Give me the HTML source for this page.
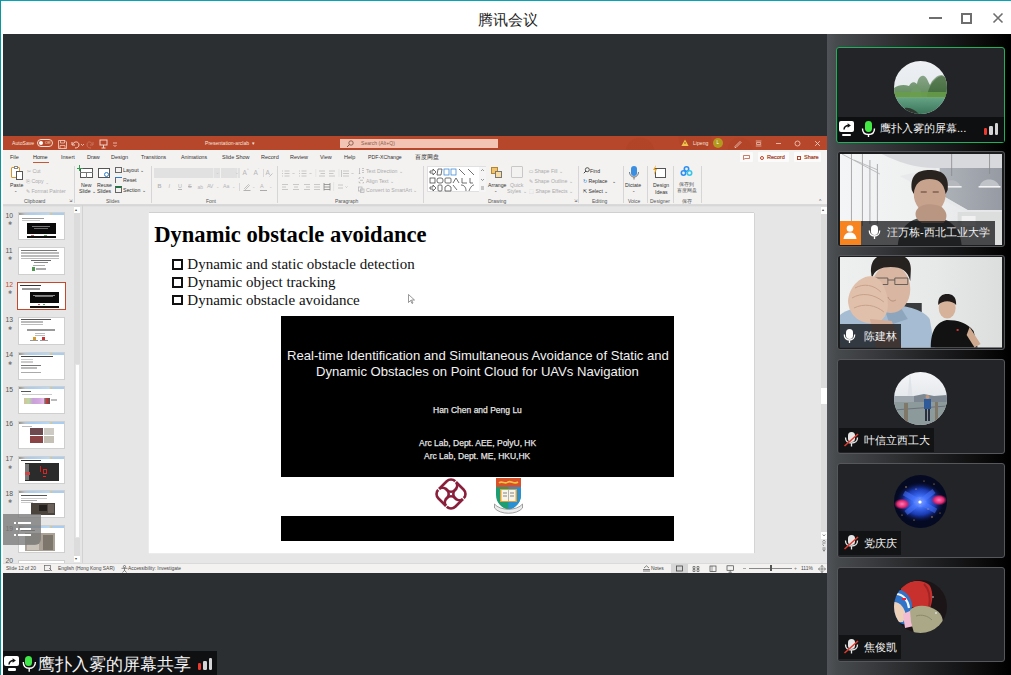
<!DOCTYPE html>
<html><head><meta charset="utf-8">
<style>
*{margin:0;padding:0;box-sizing:border-box}
html,body{width:1011px;height:675px;overflow:hidden;background:#fff;font-family:"Liberation Sans",sans-serif;position:relative}
div,span,svg{position:absolute}
.t{white-space:nowrap;line-height:1;color:#555}
#teal-top{left:0;top:0;width:1011px;height:1px;background:#05a5b8}
#teal-left{left:0;top:0;width:1.3px;height:675px;background:#0a979c}
#title{left:2px;width:1011px;top:10.7px;text-align:center;font-size:15px;color:#222;line-height:18px}
#main{left:3px;top:34px;width:824px;height:641px;background:#2c2f32}
#side{left:827px;top:34px;width:184px;height:641px;background:linear-gradient(90deg,#505357 0,#474a4d 10px,#3b3d40 40px,#212224 100px,#0e0e0f 150px,#000 182px)}
.tile{left:836px;width:169px;height:95px;border:1px solid #3b3d40;border-radius:3px;background:#232427;overflow:hidden}
/* PPT */
#ppt-title{left:3px;top:136px;width:824px;height:14px;background:#b7472a}
#ppt-ribbon{left:3px;top:150px;width:824px;height:55px;background:#f3f2f1;border-bottom:1px solid #d9d9d9}
#ppt-work{left:3px;top:205px;width:824px;height:358px;background:#e6e6e6}
#ppt-status{left:3px;top:563px;width:824px;height:10px;background:#f3f2f1;border-top:1px solid #dadada}
#slide{left:149px;top:213px;width:605px;height:340px;background:#fff;box-shadow:0 -1px 0 #d0d0d0,1px 0 0 #d4d4d4,-1px 0 0 #ececec,0 1px 0 #ececec}
.tw{color:#f6e3dc;font-size:5.1px}
.tab{font-size:5.5px;color:#333;top:155px}
.rb{font-size:5.2px;color:#333}
.rg{font-size:5.2px;color:#aaa}
.gl{font-size:5px;color:#555;top:199px}
.sep{width:1px;background:#d6d6d6;top:166px;height:37px}
.num{font-size:6.8px;color:#555;left:5.5px}
.star{font-size:5px;color:#777;left:8px}
.th{left:19px;width:45px;height:26px;background:#fff;box-shadow:0 0 0 1px #cfcfcf;overflow:hidden}
.st{font-size:4.9px;color:#444;top:566.6px}
</style></head><body>
<div id="teal-top"></div>
<div id="teal-left"></div>
<div id="title">腾讯会议</div>
<!-- window controls -->
<div style="left:929px;top:17px;width:13px;height:2px;background:#6e6e6e"></div>
<div style="left:961px;top:13px;width:11px;height:11px;border:2px solid #6e6e6e"></div>
<svg style="left:992px;top:12px" width="12" height="12" viewBox="0 0 12 12"><path d="M1.5 1.5L10.5 10.5M10.5 1.5L1.5 10.5" stroke="#6e6e6e" stroke-width="1.6"/></svg>

<div id="main"></div>
<div id="side"></div>

<!-- ============ PPT ============ -->
<div id="ppt-title"></div>
<div style="left:610px;top:136px;width:150px;height:14px;background:radial-gradient(circle at 30px 16px,rgba(120,30,10,.09) 0 14px,transparent 15px),radial-gradient(circle at 85px 2px,rgba(120,30,10,.08) 0 16px,transparent 17px),radial-gradient(circle at 130px 14px,rgba(120,30,10,.07) 0 12px,transparent 13px)"></div>
<span class="t tw" style="left:12px;top:140.5px">AutoSave</span>
<div style="left:37px;top:139px;width:16px;height:8px;border:1px solid #f3dcd3;border-radius:4px"></div>
<div style="left:39px;top:141px;width:4px;height:4px;border-radius:2px;background:#fff"></div>
<span class="t" style="left:45px;top:140.5px;font-size:4px;color:#f6e3dc">Off</span>
<svg style="left:57.5px;top:139.5px" width="9" height="9" viewBox="0 0 9 9"><path d="M.5 .5h6.5l1.5 1.5v6.5h-8z" fill="none" stroke="#f3d6cb" stroke-width=".8"/><path d="M2.5 .5v2.5h4V.5M2 8.5V5.5h5v3" fill="none" stroke="#f3d6cb" stroke-width=".7"/></svg>
<svg style="left:70px;top:139px" width="30" height="10" viewBox="0 0 30 10"><path d="M2 3 L2 6 L5 6 M2.5 5.5 C4 2 9 2 9 6 C9 8 7 9 5 9" stroke="#f3d6cb" stroke-width="1" fill="none"/><path d="M11 5l1.5 1.5 1.5-1.5" stroke="#f3d6cb" stroke-width=".8" fill="none"/><path d="M23 3 L23 6 L20 6 M22.5 5.5 C21 2 17 2 17 6 C17 8 19 9 21 9" stroke="#c9735b" stroke-width="1" fill="none"/></svg>
<svg style="left:99px;top:139px" width="22" height="10" viewBox="0 0 22 10"><rect x="1" y="1" width="7" height="5" fill="none" stroke="#f3d6cb" stroke-width="1"/><path d="M4.5 6v3M2.5 9h4" stroke="#f3d6cb" stroke-width="1"/><path d="M14 4h4M14.5 6l1.5 1.5 1.5-1.5" stroke="#f3d6cb" stroke-width=".8" fill="none"/></svg>
<span class="t tw" style="left:205px;top:140.5px">Presentation-arclab&nbsp;&nbsp;▾</span>
<div style="left:340px;top:139px;width:158px;height:9px;background:#f3c4b4"></div>
<svg style="left:346px;top:139.5px" width="8" height="8" viewBox="0 0 8 8"><circle cx="5" cy="3" r="2.2" fill="none" stroke="#7a4a3c" stroke-width=".8"/><path d="M3.5 4.5L1 7" stroke="#7a4a3c" stroke-width=".9"/></svg>
<span class="t" style="left:361px;top:140.8px;font-size:5.1px;color:#8d5b4c">Search (Alt+Q)</span>
<svg style="left:681px;top:139px" width="8" height="8" viewBox="0 0 8 8"><path d="M4 .5L7.6 7H.4z" fill="#f2c14e"/><path d="M4 3v2" stroke="#7a4a00" stroke-width=".8"/></svg>
<span class="t tw" style="left:693px;top:140.5px">Lipeng</span>
<div style="left:713px;top:138px;width:10px;height:10px;border-radius:5px;background:#b29a1f"></div>
<span class="t" style="left:716.5px;top:140.5px;font-size:4.5px;color:#fff">L</span>
<svg style="left:733px;top:139px" width="90" height="9" viewBox="0 0 90 9"><path d="M2 7.5L7 2.5 8 3.5 3 8.5H2z" fill="none" stroke="#f0cfc3" stroke-width=".8"/><path d="M22.8 2h5.6M22.8 7h5.6M23.5 3.5h4.2v2h-4.2z" fill="none" stroke="#f0cfc3" stroke-width=".7"/><path d="M43 4.5h5" stroke="#f0cfc3" stroke-width=".8"/><circle cx="64.5" cy="4.5" r="2.5" fill="none" stroke="#f0cfc3" stroke-width=".8"/><path d="M82.2 2.2l4.6 4.6M86.8 2.2l-4.6 4.6" stroke="#f0cfc3" stroke-width=".9"/></svg>

<div id="ppt-ribbon"></div>
<span class="t tab" style="left:10px">File</span>
<span class="t tab" style="left:33px;color:#222">Home</span>
<div style="left:33px;top:162px;width:16px;height:1px;background:#c4563a"></div>
<span class="t tab" style="left:61px">Insert</span>
<span class="t tab" style="left:87px">Draw</span>
<span class="t tab" style="left:111px">Design</span>
<span class="t tab" style="left:141px;font-size:5.2px">Transitions</span>
<span class="t tab" style="left:181px;font-size:5.3px">Animations</span>
<span class="t tab" style="left:222px">Slide Show</span>
<span class="t tab" style="left:261px">Record</span>
<span class="t tab" style="left:290px">Review</span>
<span class="t tab" style="left:320px">View</span>
<span class="t tab" style="left:344px">Help</span>
<span class="t tab" style="left:368px;font-size:5.2px">PDF-XChange</span>
<span class="t tab" style="left:415px;font-size:5.5px">百度网盘</span>
<!-- comments/record/share -->
<div style="left:740px;top:152px;width:13.3px;height:9.8px;background:#fbfbfb;border-radius:1px"></div>
<svg style="left:743px;top:155px" width="7" height="5" viewBox="0 0 7 5"><path d="M.5 .5h6v3H2L.5 4.5z" fill="none" stroke="#b7472a" stroke-width=".7"/></svg>
<div style="left:757.7px;top:152px;width:31.6px;height:9.8px;background:#fbfbfb;border-radius:1px"></div>
<div style="left:760px;top:155.5px;width:4px;height:4px;border-radius:2px;border:.8px solid #b7472a"></div>
<span class="t" style="left:767px;top:155px;font-size:5.5px;color:#a33e25;-webkit-text-stroke:.2px #a33e25">Record</span>
<div style="left:793.8px;top:152px;width:27.2px;height:9.8px;background:#fbfbfb;border-radius:1px"></div>
<div style="left:797px;top:155.5px;width:4px;height:4px;border:.8px solid #b7472a"></div>
<span class="t" style="left:804px;top:155px;font-size:5.5px;color:#a33e25;-webkit-text-stroke:.2px #a33e25">Share</span>

<!-- Clipboard group -->
<div style="left:11px;top:167px;width:9px;height:11px;background:#fff;border:1.5px solid #d8962a;border-radius:1px"></div>
<div style="left:14px;top:166px;width:4px;height:3px;background:#fff;border:1px solid #888"></div>
<div style="left:16px;top:171px;width:7px;height:9px;background:#fff;border:1px solid #555"></div>
<span class="t rb" style="left:10px;top:182.5px">Paste</span>
<span class="t rb" style="left:14px;top:189px;font-size:4px">⌄</span>
<span class="t rg" style="left:27px;top:168.5px">✂&nbsp;Cut</span>
<span class="t rg" style="left:26px;top:178.5px">⎘&nbsp;Copy&nbsp;&nbsp;⌄</span>
<span class="t rg" style="left:26px;top:188.5px">✎&nbsp;Format Painter</span>
<span class="t gl" style="left:24px">Clipboard</span>
<span class="t gl" style="left:69px;font-size:4px">⇲</span>
<div class="sep" style="left:74px"></div>
<!-- Slides group -->
<div style="left:80px;top:168px;width:13px;height:10px;border:1px solid #555;background:#fff"></div>
<div style="left:80px;top:172px;width:13px;height:1px;background:#777"></div>
<div style="left:86px;top:172px;width:1px;height:6px;background:#777"></div>
<div style="left:79px;top:165px;width:1px;height:6px;background:#2e9e4e"></div>
<div style="left:76.5px;top:167.5px;width:6px;height:1px;background:#2e9e4e"></div>
<span class="t rb" style="left:81px;top:182.5px">New</span>
<span class="t rb" style="left:79px;top:189px">Slide&nbsp;⌄</span>
<div style="left:98px;top:168px;width:12px;height:10px;border:1px solid #555;background:#fff"></div>
<div style="left:104px;top:172px;width:5px;height:5px;border-radius:3px;border:1px solid #2b7cd3"></div>
<span class="t rb" style="left:97px;top:182.5px">Reuse</span>
<span class="t rb" style="left:97px;top:189px">Slides</span>
<div style="left:115px;top:167px;width:7px;height:6px;border:1px solid #666"></div>
<span class="t rb" style="left:123px;top:167.5px">Layout&nbsp;⌄</span>
<div style="left:115px;top:177px;width:7px;height:6px;border-left:1px solid #666;border-top:1px solid #2b7cd3"></div>
<span class="t rb" style="left:123px;top:177.5px">Reset</span>
<div style="left:115px;top:186px;width:7px;height:7px;border:1px solid #666;border-top:2px solid #217346"></div>
<span class="t rb" style="left:123px;top:187.5px">Section&nbsp;⌄</span>
<span class="t gl" style="left:106px">Slides</span>
<div class="sep" style="left:151px"></div>
<!-- Font group -->
<div style="left:154px;top:168px;width:66px;height:10px;background:#e1e1e1"></div>
<div style="left:213px;top:168px;width:1px;height:10px;background:#ebebeb"></div>
<div style="left:221px;top:168px;width:19px;height:10px;background:#e1e1e1"></div>
<div style="left:236.5px;top:168px;width:1px;height:10px;background:#ebebeb"></div>
<svg style="left:215.5px;top:172px" width="24" height="3" viewBox="0 0 24 3"><path d="M.5 .8l1 1 1-1M20 .8l1 1 1-1" stroke="#c4c4c4" stroke-width=".6" fill="none"/></svg>
<span class="t rg" style="left:242.5px;top:170px;font-size:6.5px;color:#b5b5b5">A</span><span class="t rg" style="left:247px;top:169px;font-size:3.5px;color:#b5b5b5">^</span>
<span class="t rg" style="left:253.5px;top:170px;font-size:6.5px;color:#b5b5b5">A</span><span class="t rg" style="left:258px;top:169px;font-size:3.5px;color:#b5b5b5">ˇ</span>
<div style="left:262.5px;top:169px;width:.7px;height:8px;background:#d8d8d8"></div>
<span class="t rg" style="left:265.5px;top:170px;font-size:6.5px;color:#b5b5b5">A</span><svg style="left:269px;top:173px" width="4" height="4" viewBox="0 0 4 4"><path d="M.5 3.5l3-3" stroke="#b5b5b5" stroke-width=".8"/></svg>
<span class="t rg" style="left:157.5px;top:184px;font-size:5.5px;font-weight:bold;color:#b5b5b5">B</span>
<span class="t rg" style="left:168.5px;top:184px;font-size:5.5px;font-style:italic;color:#b5b5b5">I</span>
<span class="t rg" style="left:178px;top:184px;font-size:5.5px;text-decoration:underline;color:#b5b5b5">U</span>
<span class="t rg" style="left:188px;top:184px;font-size:5.5px;text-decoration:line-through;color:#b5b5b5">S</span>
<span class="t rg" style="left:197.5px;top:184.5px;font-size:5px;color:#b5b5b5">ab</span>
<span class="t rg" style="left:207px;top:184px;font-size:5.3px;color:#b5b5b5;letter-spacing:-.3px">AV</span><span class="t rg" style="left:216px;top:185px;font-size:4px;color:#bbb">⌄</span>
<span class="t rg" style="left:223px;top:184px;font-size:5.3px;color:#b5b5b5">Aa</span><span class="t rg" style="left:232px;top:185px;font-size:4px;color:#bbb">⌄</span>
<div style="left:239px;top:183px;width:.7px;height:8px;background:#d8d8d8"></div>
<svg style="left:242.5px;top:183px" width="8" height="8" viewBox="0 0 8 8"><path d="M1.5 5.5l4-4 1 1-4 4z" fill="none" stroke="#aaa" stroke-width=".7"/><path d="M.5 7.5h7" stroke="#aaa" stroke-width=".9"/></svg><span class="t rg" style="left:252px;top:185px;font-size:4px;color:#bbb">⌄</span>
<span class="t rg" style="left:260px;top:184px;font-size:5.5px;color:#b5b5b5">A</span><div style="left:259.5px;top:190px;width:7px;height:1px;background:#aaa"></div><span class="t rg" style="left:269px;top:185px;font-size:4px;color:#bbb">⌄</span>
<span class="t gl" style="left:206px">Font</span>
<div class="sep" style="left:277px"></div>
<!-- Paragraph group -->
<svg style="left:280px;top:166px" width="75" height="26" viewBox="0 0 75 26"><g stroke="#bdbdbd" stroke-width=".8" fill="none">
<path d="M2 5h1M4.5 5h5M2 7.5h1M4.5 7.5h5M2 10h1M4.5 10h5"/><path d="M12.5 7l1 1 1-1"/>
<path d="M19 5h1M21.5 5h5M19 7.5h1M21.5 7.5h5M19 10h1M21.5 10h5"/><path d="M29.5 7l1 1 1-1"/>
<path d="M39 5h6M40.5 7.5h4.5M39 10h6M49 5h6M49 7.5h4.5M49 10h6"/>
<path d="M63 5h6M63 7.5h6M63 10h6M61.5 4v7"/><path d="M71.5 7l1 1 1-1"/>
<path d="M2 18.5h6M2 21h4M2 23.5h6M13 18.5h6M14 21h4M13 23.5h6M24 18.5h6M26 21h4M24 23.5h6M34 18.5h6M34 21h6M34 23.5h6"/>
<path d="M58 19h5M58 22h5"/><path d="M65.5 20.5l1 1 1-1"/></g>
<g stroke="#888" stroke-width=".8" fill="none"><path d="M44 17v7.5M50 17v7.5M44 18.5h6M44 21h6M44 23.5h6"/></g>
<path d="M35.8 3v8M59 3v8M53.6 16v9" stroke="#dcdcdc" stroke-width=".6"/></svg>
<svg style="left:358px;top:166.5px" width="7" height="27" viewBox="0 0 7 27"><g stroke="#b0b0b0" stroke-width=".7" fill="none"><path d="M1.5 1v6M1 6l.5 1 .5-1M4 1.5h2M4 3.5h2M4 5.5h2"/><path d="M.5 11.5h1v-1h1M4.5 10.5h1v1M.5 15h1v1h1M4.5 16h1v-1M2 13.3h3"/><rect x=".5" y="20" width="3.5" height="4"/><rect x="2.5" y="22" width="3.5" height="3.5"/></g></svg>
<span class="t rg" style="left:366px;top:168.5px">Text Direction ⌄</span>
<span class="t rg" style="left:366px;top:178.5px">Align Text ⌄</span>
<span class="t rg" style="left:366px;top:188px">Convert to SmartArt ⌄</span>
<span class="t gl" style="left:335px">Paragraph</span>
<div class="sep" style="left:423px"></div>
<!-- Drawing group -->
<div style="left:427px;top:166px;width:59px;height:26px;background:#fff;border:1px solid #e0e0e0"></div>
<svg style="left:428px;top:167px" width="58" height="25" viewBox="0 0 58 25"><g fill="none" stroke="#333" stroke-width=".7"><path d="M2 4h3V2l3 3-3 3V6H2z"/><path d="M10 2h4l-1 6H9z"/><rect x="16" y="2" width="5" height="6" stroke="#2b7cd3"/><rect x="23" y="2" width="5" height="6" stroke="#2b7cd3"/><path d="M31 2l6 6M40 2l6 6"/><rect x="2" y="11" width="5" height="5"/><rect x="9" y="11" width="6" height="5" rx="2"/><rect x="17" y="11" width="6" height="5" rx="1"/><path d="M25 16l3-5 3 5"/><path d="M34 11v5h5M42 11v5h3"/><path d="M2 20h3v-2l3 3-3 3v-2H2z"/><rect x="10" y="18" width="4" height="6" rx="1"/><path d="M17 24v-4l3-2 3 2v4z"/><path d="M25 18l4 5M33 18c3 0 5 2 5 6M41 24c1-3 3-6 5-6"/></g><rect x="51" y="0" width="7" height="25" fill="#f5f5f5"/><path d="M53 4l1.5-1.5L56 4M53 12l1.5 1.5L56 12M53 20h3M53 22h3" stroke="#555" stroke-width=".6" fill="none"/></svg>
<div style="left:491px;top:167px;width:7px;height:7px;background:#f0c36c;border:1px solid #b5862d"></div>
<div style="left:495px;top:171px;width:7px;height:7px;background:#f7dba3;border:1px solid #777"></div>
<span class="t rb" style="left:488px;top:183px">Arrange</span>
<span class="t rb" style="left:494px;top:189px;font-size:4px">⌄</span>
<div style="left:511px;top:166px;width:12px;height:12px;border:1px solid #c8c8c8;border-radius:1px"></div>
<span class="t rg" style="left:510px;top:183px">Quick</span>
<span class="t rg" style="left:507px;top:189px">Styles ⌄</span>
<span class="t rg" style="left:529px;top:168.5px">⛀&nbsp;Shape Fill ⌄</span>
<span class="t rg" style="left:529px;top:178.5px">✎&nbsp;Shape Outline ⌄</span>
<span class="t rg" style="left:529px;top:188.5px">⬚&nbsp;Shape Effects ⌄</span>
<span class="t gl" style="left:488px">Drawing</span>
<span class="t gl" style="left:574px;font-size:4px">⇲</span>
<div class="sep" style="left:578px"></div>
<!-- Editing group -->
<svg style="left:583px;top:167px" width="7" height="7" viewBox="0 0 7 7"><circle cx="4.3" cy="2.7" r="2" fill="none" stroke="#333" stroke-width=".8"/><path d="M3 4L.8 6.2" stroke="#333" stroke-width=".9"/></svg>
<span class="t rb" style="left:590px;top:168.5px;color:#333">Find</span>
<span class="t rb" style="left:583px;top:178.5px;color:#333"><span style="position:static;color:#2b7cd3">↻</span>&nbsp;Replace&nbsp;&nbsp;&nbsp;⌄</span>
<span class="t rb" style="left:583px;top:188.5px;color:#333">⇱&nbsp;Select ⌄</span>
<span class="t gl" style="left:592px">Editing</span>
<div class="sep" style="left:623px"></div>
<!-- Voice -->
<div style="left:631px;top:166px;width:6px;height:10px;border-radius:3px;background:#3b8ee0"></div>
<svg style="left:628px;top:171px" width="12" height="9" viewBox="0 0 12 9"><path d="M1.5 1c0 3 2 5 4.5 5s4.5-2 4.5-5M6 6v2.5" stroke="#555" stroke-width=".8" fill="none"/></svg>
<span class="t rb" style="left:625px;top:183px">Dictate</span>
<span class="t rb" style="left:632px;top:189px;font-size:4px">⌄</span>
<span class="t gl" style="left:628px">Voice</span>
<div class="sep" style="left:647px"></div>
<!-- Designer -->
<div style="left:655px;top:168px;width:11px;height:10px;border:1px solid #555;background:#fff"></div>
<svg style="left:652px;top:165px" width="6" height="10" viewBox="0 0 6 10"><path d="M4 0L1 5h2L2 10l3-6H3z" fill="#e8a21d"/></svg>
<span class="t rb" style="left:653px;top:183px">Design</span>
<span class="t rb" style="left:655px;top:189.5px">Ideas</span>
<span class="t gl" style="left:650px">Designer</span>
<div class="sep" style="left:673px"></div>
<!-- Baidu -->
<svg style="left:680px;top:166px" width="13" height="10" viewBox="0 0 13 10"><g fill="none" stroke="#2d8ff0" stroke-width="1.6"><circle cx="6.5" cy="3" r="2.2"/><circle cx="3.5" cy="7" r="2.2"/><circle cx="9.5" cy="7" r="2.2" stroke="#36c5e8"/></g></svg>
<span class="t rb" style="left:679px;top:182.5px;font-size:4.8px;color:#555">保存到</span>
<span class="t rb" style="left:677px;top:189px;font-size:4.8px;color:#555">百度网盘</span>
<span class="t gl" style="left:682px;font-size:5px">保存</span>
<div class="sep" style="left:701px"></div>
<span class="t" style="left:819px;top:199px;font-size:5px;color:#555">^</span>

<!-- workspace -->
<div id="ppt-work"></div>
<div style="left:3px;top:205px;width:824px;height:2px;background:linear-gradient(#d2d2d2,#e6e6e6)"></div>
<div style="left:82px;top:205px;width:1px;height:358px;background:#d2d2d2"></div>
<div style="left:74px;top:206px;width:6px;height:356px;background:#dcdcdc"></div>
<div style="left:74px;top:207px;width:6px;height:6px;background:#fff"></div>
<span class="t" style="left:75.3px;top:207.5px;font-size:4px;color:#444">▴</span>
<div style="left:74.5px;top:364px;width:5px;height:174px;background:#fdfdfd;border:1px solid #e4e4e4"></div>
<div style="left:74px;top:556px;width:6px;height:6px;background:#fff"></div>
<span class="t" style="left:75.3px;top:557px;font-size:4px;color:#444">▾</span>
<!-- right scrollbar -->
<div style="left:821px;top:206px;width:6px;height:326px;background:#dcdcdc"></div>
<div style="left:821px;top:207px;width:6px;height:7px;background:#fff"></div>
<span class="t" style="left:822.3px;top:208px;font-size:4px;color:#444">▴</span>
<div style="left:821px;top:388px;width:5.5px;height:15.5px;background:#fff"></div>
<div style="left:821px;top:532px;width:6px;height:7px;background:#fff"></div>
<svg style="left:821px;top:532px" width="6" height="22" viewBox="0 0 6 22"><path d="M1.8 2.6l1.2 1.2 1.2-1.2" stroke="#333" stroke-width=".7" fill="none"/><path d="M1.5 9.5l1.5-1.3 1.5 1.3M1.5 11h3M1.5 12.5l1.5 1.3" stroke="#444" stroke-width=".6" fill="none"/><path d="M1.5 16h3M1.5 17.3l1.5 1.3 1.5-1.3M3 17.5v2" stroke="#444" stroke-width=".6" fill="none"/></svg>
<!-- thumbnails -->
<span class="t num" style="top:212.5px">10</span><span class="t star" style="top:221.0px">✱</span><div class="th" style="top:213.0px"><div style="left:0;top:0;width:45.5px;height:2.3px;background:linear-gradient(90deg,#9a9488 0,#b9c6d4 6px,#a9cdf0 12px,#b8d8f4 30px,#d0c890 32px,#a9cdf0 34px)"></div><div style="left:3.0px;top:4.5px;width:22.0px;height:.7px;background:#999"></div><div style="left:3.0px;top:7.0px;width:18.0px;height:.7px;background:#c8c8c8"></div><div style="left:8px;top:9.8px;width:28.5px;height:11.3px;background:#0a0a0a"></div><div style="left:13px;top:13px;width:18px;height:.7px;background:#777"></div><div style="left:15px;top:15px;width:14px;height:.7px;background:#666"></div><div style="left:8px;top:23px;width:28.5px;height:2px;background:#111"></div><div style="left:12px;top:21.5px;width:3px;height:1.5px;background:#c66"></div><div style="left:25px;top:21.5px;width:3px;height:1.5px;background:#6a6"></div></div>
<span class="t num" style="top:247.9px">11</span><span class="t star" style="top:256.4px">✱</span><div class="th" style="top:248.4px"><div style="left:1.5px;top:1.6px;width:36.0px;height:.7px;background:#777"></div><div style="left:2.0px;top:3.6px;width:38.0px;height:.7px;background:#bbb"></div><div style="left:2.0px;top:5.0px;width:38.0px;height:.7px;background:#bbb"></div><div style="left:2.0px;top:6.4px;width:38.0px;height:.7px;background:#bbb"></div><div style="left:2.0px;top:7.8px;width:38.0px;height:.7px;background:#bbb"></div><div style="left:2.0px;top:9.2px;width:38.0px;height:.7px;background:#bbb"></div><div style="left:12px;top:11.5px;width:20px;height:.9px;background:#666"></div><div style="left:15px;top:13.2px;width:14px;height:.8px;background:#888"></div><div style="left:14.0px;top:16.5px;width:12.0px;height:.7px;background:#aaa"></div><div style="left:13px;top:19px;width:2.5px;height:3.5px;background:#4e9a4e"></div><div style="left:17.0px;top:19.5px;width:10.0px;height:.7px;background:#aaa"></div><div style="left:17.0px;top:21.0px;width:10.0px;height:.7px;background:#aaa"></div></div>
<span class="t num" style="top:281.5px;color:#c4482a">12</span><span class="t star" style="top:290.0px">✱</span><div style="left:17px;top:281.5px;width:49px;height:28.5px;border:1.5px solid #c4482a;background:#fff"></div><div style="left:19px;top:283.5px;width:45px;height:24.5px;background:#fff;overflow:hidden"><div style="left:1px;top:1px;width:21px;height:1.2px;background:#333"></div><div style="left:2.5px;top:4.0px;width:18.0px;height:.7px;background:#999"></div><div style="left:2.5px;top:5.6px;width:18.0px;height:.7px;background:#999"></div><div style="left:10.5px;top:8px;width:29.5px;height:11.5px;background:#0a0a0a"></div><div style="left:14px;top:11px;width:22px;height:.6px;background:#888"></div><div style="left:16px;top:12.5px;width:18px;height:.6px;background:#777"></div><div style="left:10.5px;top:22.5px;width:29.5px;height:1.8px;background:#111"></div><div style="left:19px;top:20.2px;width:2px;height:1.5px;background:#c55"></div><div style="left:24px;top:20.2px;width:2px;height:1.5px;background:#5a5"></div></div>
<span class="t num" style="top:317.1px">13</span><span class="t star" style="top:325.6px">✱</span><div class="th" style="top:317.6px"><div style="left:1.5px;top:1.5px;width:30.0px;height:.7px;background:#555"></div><div style="left:2.0px;top:3.5px;width:22.0px;height:.7px;background:#bbb"></div><div style="left:2.0px;top:4.9px;width:22.0px;height:.7px;background:#bbb"></div><div style="left:2.0px;top:6.3px;width:22.0px;height:.7px;background:#bbb"></div><div style="left:8.0px;top:11.0px;width:28.0px;height:.7px;background:#999"></div><div style="left:8.0px;top:12.3px;width:28.0px;height:.7px;background:#999"></div><div style="left:16.0px;top:15.5px;width:10.0px;height:.7px;background:#bbb"></div><div style="left:16.0px;top:17.0px;width:10.0px;height:.7px;background:#bbb"></div><div style="left:14px;top:19.5px;width:2.5px;height:2.5px;background:#d89a2a"></div><div style="left:23px;top:19.5px;width:2.5px;height:2.5px;background:#c33"></div><div style="left:11.0px;top:22.8px;width:8.0px;height:.7px;background:#999"></div><div style="left:21.0px;top:22.8px;width:8.0px;height:.7px;background:#999"></div></div>
<span class="t num" style="top:352.0px">14</span><span class="t star" style="top:360.5px">✱</span><div class="th" style="top:352.5px"><div style="left:0;top:0;width:45.5px;height:2.3px;background:linear-gradient(90deg,#9a9488 0,#b9c6d4 6px,#a9cdf0 12px,#b8d8f4 30px,#d0c890 32px,#a9cdf0 34px)"></div><div style="left:1.5px;top:3.8px;width:32.0px;height:.7px;background:#444"></div><div style="left:2.0px;top:6.5px;width:12.0px;height:.7px;background:#ccc"></div><div style="left:2.0px;top:8.0px;width:12.0px;height:.7px;background:#ccc"></div><div style="left:2.0px;top:9.5px;width:12.0px;height:.7px;background:#ccc"></div><div style="left:2.0px;top:12.0px;width:20.0px;height:.7px;background:#777"></div><div style="left:2.0px;top:14.0px;width:16.0px;height:.7px;background:#bbb"></div><div style="left:2.0px;top:15.5px;width:16.0px;height:.7px;background:#bbb"></div><div style="left:2.0px;top:19.0px;width:20.0px;height:.7px;background:#aaa"></div></div>
<span class="t num" style="top:386.5px">15</span><div class="th" style="top:387.0px"><div style="left:0;top:0;width:45.5px;height:2.3px;background:linear-gradient(90deg,#9a9488 0,#b9c6d4 6px,#a9cdf0 12px,#b8d8f4 30px,#d0c890 32px,#a9cdf0 34px)"></div><div style="left:1.5px;top:3.8px;width:10.0px;height:.7px;background:#555"></div><div style="left:3.0px;top:6.5px;width:30.0px;height:.7px;background:#ccc"></div><div style="left:5px;top:10.5px;width:26px;height:6.5px;background:linear-gradient(90deg,#d8c0a0 0,#b9d9a0 18%,#c9a0d9 35%,#d4a8e0 60%,#e8b8e8 75%,#777 80%,#c33 88%,#555 100%)"></div><div style="left:32px;top:12px;width:6px;height:2px;background:#bbb"></div></div>
<span class="t num" style="top:421.1px">16</span><div class="th" style="top:421.6px"><div style="left:0;top:0;width:45.5px;height:2.3px;background:linear-gradient(90deg,#9a9488 0,#b9c6d4 6px,#a9cdf0 12px,#b8d8f4 30px,#d0c890 32px,#a9cdf0 34px)"></div><div style="left:2.5px;top:4.5px;width:10.0px;height:.7px;background:#bbb"></div><div style="left:11px;top:6.5px;width:13px;height:6.5px;background:#6d4a4f"></div><div style="left:24.5px;top:6.5px;width:10.5px;height:6.5px;background:#cdcac4"></div><div style="left:11px;top:14px;width:13px;height:7px;background:#8a4446"></div><div style="left:24.5px;top:14px;width:10.5px;height:7px;background:#c4c0b6"></div></div>
<span class="t num" style="top:456.1px">17</span><span class="t star" style="top:464.6px">✱</span><div class="th" style="top:456.6px"><div style="left:0;top:0;width:45.5px;height:2.3px;background:linear-gradient(90deg,#9a9488 0,#b9c6d4 6px,#a9cdf0 12px,#b8d8f4 30px,#d0c890 32px,#a9cdf0 34px)"></div><div style="left:1.5px;top:3.8px;width:20.0px;height:.7px;background:#333"></div><div style="left:6px;top:6px;width:33.5px;height:18px;background:#2b2b2b"></div><div style="left:6px;top:7px;width:4px;height:16px;background:#777"></div><div style="left:6px;top:15px;width:5px;height:3px;background:#c44"></div><div style="left:21px;top:9px;width:1px;height:6px;background:#c22"></div><div style="left:24px;top:12px;width:4px;height:5px;border:.8px solid #d22"></div><div style="left:24px;top:19px;width:3px;height:1.5px;background:#e22"></div></div>
<span class="t num" style="top:490.5px">18</span><span class="t star" style="top:499.0px">✱</span><div class="th" style="top:491.0px"><div style="left:0;top:0;width:45.5px;height:2.3px;background:linear-gradient(90deg,#9a9488 0,#b9c6d4 6px,#a9cdf0 12px,#b8d8f4 30px,#d0c890 32px,#a9cdf0 34px)"></div><div style="left:1.5px;top:3.8px;width:26.0px;height:.7px;background:#555"></div><div style="left:2.0px;top:6.5px;width:26.0px;height:.7px;background:#ccc"></div><div style="left:2.0px;top:8.5px;width:16.0px;height:.7px;background:#aaa"></div><div style="left:2.0px;top:10.5px;width:12.0px;height:.7px;background:#ccc"></div><div style="left:11.5px;top:12px;width:24px;height:11.5px;background:#4b443d"></div><div style="left:20px;top:14px;width:8px;height:6px;background:#25211e"></div><div style="left:29px;top:13px;width:6px;height:9px;background:#6a625a"></div></div>
<span class="t num" style="top:525.5px">19</span><div class="th" style="top:526.0px"><div style="left:0;top:0;width:45.5px;height:2.3px;background:linear-gradient(90deg,#9a9488 0,#b9c6d4 6px,#a9cdf0 12px,#b8d8f4 30px,#d0c890 32px,#a9cdf0 34px)"></div><div style="left:1.5px;top:3.8px;width:14.0px;height:.7px;background:#666"></div><div style="left:6px;top:7px;width:30px;height:18px;background:#aaa296"></div><div style="left:24px;top:9px;width:10px;height:15px;background:#7d766c"></div><div style="left:8px;top:18px;width:12px;height:6px;background:#c8c2b8"></div></div>
<span class="t num" style="top:558px">20</span>
<div class="th" style="top:561px;height:2px"></div>
<!-- floating tencent menu -->
<div style="left:3px;top:514px;width:38px;height:31px;background:rgba(120,120,120,.78);border-radius:0 0 6px 0"></div>
<div style="left:14px;top:522px;width:2px;height:2px;background:#fff"></div>
<div style="left:18px;top:522px;width:13px;height:1.5px;background:#fff"></div>
<div style="left:16px;top:528px;width:2px;height:2px;background:#fff"></div>
<div style="left:20px;top:528px;width:11px;height:1.5px;background:#fff"></div>
<div style="left:14px;top:534px;width:2px;height:2px;background:#fff"></div>
<div style="left:18px;top:534px;width:13px;height:1.5px;background:#fff"></div>

<!-- slide -->
<div id="slide"></div>
<span class="t" style="left:154.2px;top:223.5px;font-family:'Liberation Serif',serif;font-weight:bold;font-size:22.6px;color:#000">Dynamic obstacle avoidance</span>
<div style="left:172px;top:259.2px;width:10.8px;height:10.6px;border:2.2px solid #111"></div>
<div style="left:172px;top:277.2px;width:10.8px;height:10.6px;border:2.2px solid #111"></div>
<div style="left:172px;top:294.7px;width:10.8px;height:10.6px;border:2.2px solid #111"></div>
<span class="t" style="left:187.3px;top:257.2px;font-family:'Liberation Serif',serif;font-size:15px;color:#111">Dynamic and static obstacle detection</span>
<span class="t" style="left:187.3px;top:275.2px;font-family:'Liberation Serif',serif;font-size:15px;color:#111">Dynamic object tracking</span>
<span class="t" style="left:187.3px;top:293.2px;font-family:'Liberation Serif',serif;font-size:15px;color:#111">Dynamic obstacle avoidance</span>
<svg style="left:408px;top:294px" width="7" height="10" viewBox="0 0 7 10"><path d="M.5 .5v8l2-2 1.5 3 1-.5-1.5-3h3z" fill="#fff" stroke="#555" stroke-width=".6"/></svg>
<div style="left:281px;top:315.5px;width:392.5px;height:161px;background:#000"></div>
<span class="t" style="left:287px;top:348.5px;font-size:13.1px;color:#f2f2f2">Real-time Identification and Simultaneous Avoidance of Static and</span>
<span class="t" style="left:316px;top:364.5px;font-size:13.1px;color:#f2f2f2">Dynamic Obstacles on Point Cloud for UAVs Navigation</span>
<span class="t" style="left:433px;top:406px;font-size:8.5px;color:#eee;-webkit-text-stroke:.25px #ddd">Han Chen and Peng Lu</span>
<span class="t" style="left:419px;top:439.3px;font-size:8.5px;color:#eee;-webkit-text-stroke:.25px #ddd">Arc Lab, Dept. AEE, PolyU, HK</span>
<span class="t" style="left:424px;top:451.8px;font-size:8.5px;color:#eee;-webkit-text-stroke:.25px #ddd">Arc Lab, Dept. ME, HKU,HK</span>
<!-- PolyU logo -->
<svg style="left:433px;top:476px" width="36" height="36" viewBox="0 0 36 36"><g transform="rotate(45 18 18)" fill="none" stroke="#8a1f3b" stroke-width="2.6"><path d="M6 24 V12 A6 6 0 0 1 12 6 H12.5 A5.5 5.5 0 0 1 18 11.5 V12.5 A5.5 5.5 0 0 1 12.5 18 H10"/><path d="M6 24 V12 A6 6 0 0 1 12 6 H12.5 A5.5 5.5 0 0 1 18 11.5 V12.5 A5.5 5.5 0 0 1 12.5 18 H10" transform="rotate(90 18 18)"/><path d="M6 24 V12 A6 6 0 0 1 12 6 H12.5 A5.5 5.5 0 0 1 18 11.5 V12.5 A5.5 5.5 0 0 1 12.5 18 H10" transform="rotate(180 18 18)"/><path d="M6 24 V12 A6 6 0 0 1 12 6 H12.5 A5.5 5.5 0 0 1 18 11.5 V12.5 A5.5 5.5 0 0 1 12.5 18 H10" transform="rotate(270 18 18)"/></g><g transform="rotate(45 18 18)" stroke="#fff" stroke-width="1.1"><path d="M4 23.5h4M23.5 32v-4M32 12.5h-4M12.5 4v4"/></g></svg>
<!-- HKU logo -->
<svg style="left:494px;top:477px" width="29" height="38" viewBox="0 0 29 38"><path d="M2 1 H27 V18 C27 26 21 31 14.5 33 C8 31 2 26 2 18z" fill="#1e9c72"/><path d="M14.5 10 H27 V18 C27 26 21 31 14.5 33z" fill="#2b90d2"/><rect x="2" y="1" width="25" height="9" fill="#d9502c"/><path d="M5 6 C8 3 11 8 14 5 C17 3 20 8 24 5" stroke="#f2c53d" stroke-width="1.6" fill="none"/><rect x="6" y="12" width="17" height="13" fill="#e0a038"/><rect x="7.5" y="13" width="14" height="11" fill="#f7f4ea"/><path d="M14.5 13v11" stroke="#888" stroke-width=".6"/><path d="M9 16h4M9 19h4M16 16h4M16 19h4" stroke="#555" stroke-width=".7"/><path d="M0.5 27 C6 34 23 34 28.5 27 L28.5 31 C23 38 6 38 0.5 31z" fill="#ececec" stroke="#8a8a8a" stroke-width=".8"/></svg>
<div style="left:281px;top:515.5px;width:392.5px;height:25.3px;background:#000"></div>

<!-- status bar -->
<div id="ppt-status"></div>
<span class="t st" style="left:6px">Slide 12 of 20</span>
<svg style="left:44px;top:565px" width="9" height="7" viewBox="0 0 9 7"><rect x=".5" y=".5" width="6" height="5" fill="none" stroke="#666" stroke-width=".7"/><path d="M5 3l3 3" stroke="#666" stroke-width=".7"/></svg>
<span class="t st" style="left:58px">English (Hong Kong SAR)</span>
<svg style="left:120.5px;top:564.5px" width="7" height="8" viewBox="0 0 7 8"><circle cx="3.5" cy="1.6" r="1.1" fill="none" stroke="#555" stroke-width=".7"/><path d="M.5 3.3h6M3.5 3.3v2M1.5 7.5l2-2.2 2 2.2" fill="none" stroke="#555" stroke-width=".7"/></svg>
<span class="t st" style="left:128px">Accessibility: Investigate</span>
<svg style="left:642px;top:565px" width="9" height="7" viewBox="0 0 9 7"><path d="M1 6h7M1 4.5h7M2 3L4.5 .8 7 3" fill="none" stroke="#555" stroke-width=".7"/></svg>
<span class="t st" style="left:651px">Notes</span>
<div style="left:671px;top:564px;width:17px;height:9px;background:#d6d6d6"></div>
<svg style="left:676px;top:565px" width="100" height="8" viewBox="0 0 100 8"><rect x=".5" y="1" width="6" height="5" fill="none" stroke="#444" stroke-width=".8"/><path d="M17 1.5h2v2h-2zM21 1.5h2v2h-2zM17 4.5h2v2h-2zM21 4.5h2v2h-2z" fill="none" stroke="#444" stroke-width=".6"/><rect x="34" y="1" width="6" height="5.5" fill="none" stroke="#444" stroke-width=".7"/><path d="M36 1v5.5" stroke="#444" stroke-width=".5"/><rect x="51" y=".8" width="6.5" height="4.5" fill="none" stroke="#444" stroke-width=".7"/><path d="M54.2 5.3v2M52.5 7.3h3.4" stroke="#444" stroke-width=".6"/><path d="M67 3.5h3" stroke="#777" stroke-width=".6"/></svg>
<div style="left:749px;top:567.8px;width:43px;height:.6px;background:#888"></div>
<div style="left:769.5px;top:565px;width:2px;height:6px;background:#555"></div>
<span class="t st" style="left:794px;top:565.5px;font-size:5px;color:#777">+</span>
<span class="t st" style="left:801px">111%</span>
<svg style="left:818px;top:564.5px" width="8" height="8" viewBox="0 0 8 8"><path d="M4 .5v7M.5 4h7M2.5 1.8L4 .5l1.5 1.3M2.5 6.2L4 7.5l1.5-1.3M1.8 2.5L.5 4l1.3 1.5M6.2 2.5L7.5 4 6.2 5.5" fill="none" stroke="#555" stroke-width=".6"/></svg>

<!-- ============ SIDEBAR TILES ============ -->
<!-- tile 1 -->
<div style="left:836px;top:47px;width:169px;height:96px;border:1.5px solid #1fb15a;border-radius:3px;background:#232427;overflow:hidden"></div>
<svg style="left:894px;top:61px" width="53" height="53" viewBox="0 0 53 53"><defs><clipPath id="c1"><circle cx="26.5" cy="26.5" r="26.5"/></clipPath><linearGradient id="sky1" x1="0" y1="0" x2="0" y2="1"><stop offset="0" stop-color="#eef0f4"/><stop offset="1" stop-color="#dfe6e8"/></linearGradient><linearGradient id="wat1" x1="0" y1="0" x2="0" y2="1"><stop offset="0" stop-color="#66a486"/><stop offset="1" stop-color="#3a7559"/></linearGradient><linearGradient id="m1" x1="0" y1="0" x2="0" y2="1"><stop offset="0" stop-color="#8aa58a"/><stop offset="1" stop-color="#5f8a5a"/></linearGradient><linearGradient id="m2" x1="0" y1="0" x2="0" y2="1"><stop offset="0" stop-color="#5e7e58"/><stop offset="1" stop-color="#3f6a3a"/></linearGradient></defs><g clip-path="url(#c1)"><rect width="53" height="53" fill="url(#sky1)"/><path d="M0 27 C4 24 10 23 15 25 C17 21 20 20 23 23 C24 18 26 14 30 15 C33 16 34 21 36 24 C38 19 43 14 48 14 C51 15 53 17 53 20 V36 H0z" fill="url(#m1)"/><path d="M33 36 C34 26 40 17 47 15 C51 15 53 18 53 22 V36z" fill="url(#m2)"/><path d="M15 36 C17 30 19 25 23 24 C26 25 27 30 28 36z" fill="#6f9868"/><path d="M0 31 H53 V37.5 H0z" fill="#6a9e4a" opacity=".85"/><rect y="36.5" width="53" height="16.5" fill="url(#wat1)"/><path d="M11 47 C16 46 22 50 25 53 L14 53 C12 51 10 49 11 47z" fill="#2e3630"/></g></svg>
<div style="left:837.5px;top:117px;width:166px;height:24.5px;background:#0e0f10"></div>
<div style="left:839.2px;top:120.9px;width:15.3px;height:10.9px;background:#fff;border-radius:2px"></div>
<svg style="left:841.5px;top:121.8px" width="10" height="9" viewBox="0 0 10 9"><path d="M2 7.5 C2.3 4.8 4.3 3.5 6.8 3.5" stroke="#111" stroke-width="1.5" fill="none"/><path d="M5.6 1.3 L8.9 3.5 L5.6 5.7z" fill="#111"/></svg>
<div style="left:842.4px;top:133.8px;width:8.6px;height:2.2px;background:#fff;border-radius:1.1px"></div>
<div style="left:864.7px;top:121.2px;width:6.9px;height:10.8px;border-radius:3.45px;background:#44ea44"></div>
<svg style="left:860.6px;top:126.5px" width="15" height="11" viewBox="0 0 15 11"><path d="M1.5 1.5 C1.5 5.5 4 7.5 7.5 7.5 C11 7.5 13.5 5.5 13.5 1.5M7.5 7.5v2.5" stroke="#fff" stroke-width="1.4" fill="none"/></svg>
<span class="t" style="left:880px;top:123.3px;font-size:11.2px;color:#f2f2f2">鹰扑入雾的屏幕...</span>
<div style="left:984px;top:128.1px;width:3.2px;height:6.9px;background:#ee3a2e;border-radius:1.2px"></div>
<div style="left:989.2px;top:126.1px;width:3.4px;height:8.9px;background:#d4d4d6;border-radius:1.2px"></div>
<div style="left:994.9px;top:122.9px;width:3.4px;height:12.1px;background:#d4d4d6;border-radius:1.2px"></div>

<!-- tile 2 -->
<div style="left:837px;top:151px;width:168px;height:96px;border:1.2px solid #55575b;border-radius:3px;background:#1b1c1e"></div>
<svg style="left:839.5px;top:153.5px" width="162" height="91" preserveAspectRatio="none" viewBox="0 0 162.5 91"><defs><linearGradient id="w2" x1="0" y1="0" x2="1" y2="0"><stop offset="0" stop-color="#f4f5f6"/><stop offset=".5" stop-color="#eeefef"/><stop offset="1" stop-color="#e4e5e7"/></linearGradient><linearGradient id="wl2" x1="0" y1="0" x2="1" y2="0"><stop offset="0" stop-color="#aeb2b9"/><stop offset="1" stop-color="#969ba3"/></linearGradient></defs>
<rect width="162.5" height="91" fill="url(#w2)"/>
<path d="M42 0 H162.5 V14 H96 C75 14 58 8 42 0z" fill="#d8d9dc"/>
<path d="M100 14 H162.5 V56 H128 L100 40z" fill="url(#wl2)"/>
<path d="M60 22 L162.5 78 V58 L128 56 L100 40 L96 14z" fill="#e6e7e9" opacity=".8"/>
<g stroke="#aaaaad" stroke-width="1"><path d="M11.5 0V70M22.5 0V72M30 6V70M37.5 10V70"/></g>
<g stroke="#b0b0b3" stroke-width=".8"><path d="M2 0 L40 20M14 6 L38 16"/></g>
<path d="M112 0v22M150 0v20" stroke="#8a8a8d" stroke-width=".8"/>
<path d="M104 33 C105 24 119 24 121 33z" fill="#b5b8bd"/><rect x="103" y="32" width="19" height="1.6" fill="#eee"/>
<path d="M140 33 C141 23 158 23 160 33z" fill="#c0c3c7"/><rect x="139" y="32" width="22" height="1.6" fill="#f4f4f4"/>
<path d="M118 58 h44.5 v33 h-44.5z" fill="#dcdddd"/>
<path d="M122 62 h14 v10 h-14z" fill="#f1f1f1"/>
<path d="M58 91 C60 72 70 64 90 62 C110 64 120 72 122 91z" fill="#4a4f4d"/>
<ellipse cx="90" cy="40" rx="16" ry="19" fill="#c7a38e"/>
<path d="M72 36 C70 20 79 16 90 16 C101 16 110 20 108 36 L106 40 C104 28 98 25 90 25 C80 25 75 30 74 40z" fill="#29231f"/>
<path d="M81 38h6M93 38h6" stroke="#5a3f32" stroke-width="1.1"/>
<path d="M76 58 C78 50 92 48 102 53 C108 58 108 64 104 69 L82 69 C77 66 75 62 76 58z" fill="#b99682"/>
</svg>
<div style="left:839.5px;top:220.5px;width:155px;height:24px;background:rgba(14,14,16,.72)"></div>
<div style="left:839.5px;top:220.5px;width:21px;height:24px;background:#f7841e"></div>
<svg style="left:842px;top:223px" width="16" height="18" viewBox="0 0 16 18"><circle cx="8" cy="5.5" r="3.3" fill="#fff"/><path d="M1.5 16 C2 11 5 9.5 8 9.5 C11 9.5 14 11 14.5 16z" fill="#fff"/></svg>
<div style="left:870.5px;top:225px;width:7px;height:10px;border-radius:3.5px;background:#fff"></div>
<svg style="left:867.5px;top:229px" width="13" height="11" viewBox="0 0 13 11"><path d="M1.3 1.5 C1.3 5 3.5 7 6.5 7 C9.5 7 11.7 5 11.7 1.5M6.5 7v3" stroke="#fff" stroke-width="1.3" fill="none"/></svg>
<span class="t" style="left:887px;top:227.3px;font-size:11.3px;color:#f2f2f2">汪万栋-西北工业大学</span>

<!-- tile 3 -->
<div style="left:837px;top:255px;width:168px;height:95px;border:1.2px solid #55575b;border-radius:3px;background:#1b1c1e"></div>
<svg style="left:839.5px;top:257px" width="162" height="90.5" preserveAspectRatio="none" viewBox="0 0 162.5 90.5"><defs><linearGradient id="w3" x1="0" y1="0" x2="1" y2="0"><stop offset="0" stop-color="#eeefef"/><stop offset=".6" stop-color="#e7e9e8"/><stop offset="1" stop-color="#dcdede"/></linearGradient></defs>
<rect width="162.5" height="90.5" fill="url(#w3)"/>
<path d="M62 46 h20 v9 h-20z" fill="#3a3b3e"/>
<path d="M0 58 C6 52 20 50 35 48 C55 46 82 50 90 62 L95 90.5 H0z" fill="#a5bcd2"/>
<path d="M44 50 L60 49 L68 62 L50 68z" fill="#8ea6bd"/>
<ellipse cx="51" cy="32" rx="19.5" ry="24" fill="#d8b6a2"/>
<path d="M31 14 C31 0 40 -3 51 -3 C62 -3 72 0 71 14 L70.5 24 C68 14 62 10 51 10 C41 10 34 13 32 22z" fill="#26221f"/>
<path d="M35 21 h13 v6.5 h-13z M55 21 h13 v6.5 h-13z M48 23h7" fill="none" stroke="#5a5550" stroke-width=".9"/>
<path d="M48 40 C50 44 53 45 56 43" stroke="#b38c78" stroke-width="1" fill="none"/>
<path d="M8 44 C9 30 20 19 32 19 C42 21 48 34 48 48 C48 56 44 64 36 66 C22 68 9 60 8 44z" fill="#e0c0ab"/>
<path d="M15 31 C24 26 34 28 41 35M12 41 C22 35 34 37 44 45M14 51 C24 46 36 48 44 55" stroke="#c7a18b" stroke-width="1" fill="none"/>
<path d="M30 62 L52 64 L62 90.5 L36 90.5z" fill="#d3ad97"/>
<path d="M91 90.5 C91 72 98 65 107 63 C118 63 128 66 134 74 L138 90.5z" fill="#121212"/>
<path d="M130 70 L141 87 L135 90.5 L127 78z" fill="#cfa98f"/>
<ellipse cx="107.5" cy="51" rx="8.5" ry="10.5" fill="#d6b29a"/>
<path d="M98.5 48 C98 39 103 37 107.5 37 C112 37 117 39 116.5 48 C112 43 103 43 98.5 48z" fill="#1e1b1a"/>
<rect x="117" y="72" width="2" height="2" fill="#c33"/>
</svg>
<div style="left:839.5px;top:324px;width:61px;height:23.5px;background:rgba(14,14,16,.75)"></div>
<div style="left:846px;top:329px;width:7px;height:10px;border-radius:3.5px;background:#fff"></div>
<svg style="left:843px;top:333px" width="13" height="11" viewBox="0 0 13 11"><path d="M1.3 1.5 C1.3 5 3.5 7 6.5 7 C9.5 7 11.7 5 11.7 1.5M6.5 7v3" stroke="#fff" stroke-width="1.3" fill="none"/></svg>
<span class="t" style="left:864px;top:331px;font-size:11.3px;color:#f2f2f2">陈建林</span>

<!-- tile 4 -->
<div style="left:837px;top:358.5px;width:168px;height:95px;border:1.2px solid #55575b;border-radius:3px;background:#232427"></div>
<svg style="left:894px;top:372px" width="53" height="53" viewBox="0 0 53 53"><defs><clipPath id="c4"><circle cx="26.5" cy="26.5" r="26.5"/></clipPath><linearGradient id="sky4" x1="0" y1="0" x2="0" y2="1"><stop offset="0" stop-color="#f4f5f7"/><stop offset="1" stop-color="#d5dbe0"/></linearGradient></defs><g clip-path="url(#c4)"><rect width="53" height="53" fill="url(#sky4)"/><path d="M16 0 L19 30 L13 30z" fill="#e0e4e8"/><path d="M0 24 H53 V32 H0z" fill="#9ea6ae"/><path d="M20 24 L30 22 L40 24 L53 23 V30 H20z" fill="#7d8792"/><rect y="30" width="53" height="23" fill="#8c9a9b"/><path d="M0 38 L53 34" stroke="#556" stroke-width=".6"/><rect x="10" y="31" width="4" height="22" fill="#807868"/><rect x="41" y="30" width="3" height="20" fill="#807868"/><path d="M30 27 h7 v10 h-7z" fill="#2f5a9a"/><circle cx="33.5" cy="25" r="2" fill="#c09880"/><path d="M31 37 h2 v12 h-2zM34 37 h2 v12 h-2z" fill="#2a3040"/></g></svg>
<div style="left:839px;top:428px;width:95px;height:23.5px;background:#121314"></div>
<svg style="left:843px;top:431px" width="17" height="17" viewBox="0 0 17 17"><rect x="5" y="1" width="7" height="10" rx="3.5" fill="#e6e6e6"/><path d="M2.5 6.5 C2.5 10 5 12 8.5 12 C12 12 14.5 10 14.5 6.5M8.5 12v3.5" stroke="#e6e6e6" stroke-width="1.3" fill="none"/><path d="M1.5 15 L15 3" stroke="#e23b2e" stroke-width="1.5"/></svg>
<span class="t" style="left:864px;top:435px;font-size:11.3px;color:#f2f2f2">叶信立西工大</span>

<!-- tile 5 -->
<div style="left:837px;top:462.5px;width:168px;height:95px;border:1.2px solid #55575b;border-radius:3px;background:#232427"></div>
<svg style="left:894px;top:475px" width="53" height="53" viewBox="0 0 53 53"><defs><clipPath id="c5"><circle cx="26.5" cy="26.5" r="26.5"/></clipPath><radialGradient id="g5" cx=".5" cy=".5" r=".5"><stop offset="0" stop-color="#b9ccff"/><stop offset=".3" stop-color="#3d6cf5"/><stop offset=".65" stop-color="#1a3ab0"/><stop offset="1" stop-color="#0a1450" stop-opacity="0"/></radialGradient><radialGradient id="p5" cx=".5" cy=".5" r=".5"><stop offset="0" stop-color="#ff7ab8"/><stop offset=".6" stop-color="#e0286e"/><stop offset="1" stop-color="#c01a5a" stop-opacity="0"/></radialGradient></defs><g clip-path="url(#c5)"><rect width="53" height="53" fill="#050a22"/><ellipse cx="26" cy="27" rx="24" ry="20" fill="url(#g5)"/><path d="M10 18 L26 27 L42 36 M12 38 L26 27 L40 16" stroke="#4a78ff" stroke-width="5" opacity=".5"/><ellipse cx="8" cy="29" rx="8" ry="5.5" fill="url(#p5)"/><ellipse cx="45" cy="25" rx="8" ry="5.5" fill="url(#p5)"/><circle cx="26" cy="27" r="1.6" fill="#fff"/><g fill="#e8b060"><circle cx="12" cy="12" r=".7"/><circle cx="38" cy="42" r=".7"/><circle cx="20" cy="45" r=".6"/><circle cx="40" cy="9" r=".6"/><circle cx="30" cy="6" r=".5"/><circle cx="8" cy="40" r=".6"/><circle cx="46" cy="38" r=".5"/><circle cx="22" cy="14" r=".6"/><circle cx="34" cy="34" r=".6"/></g></g></svg>
<div style="left:839px;top:531px;width:61.5px;height:23.5px;background:#121314"></div>
<svg style="left:843px;top:534px" width="17" height="17" viewBox="0 0 17 17"><rect x="5" y="1" width="7" height="10" rx="3.5" fill="#e6e6e6"/><path d="M2.5 6.5 C2.5 10 5 12 8.5 12 C12 12 14.5 10 14.5 6.5M8.5 12v3.5" stroke="#e6e6e6" stroke-width="1.3" fill="none"/><path d="M1.5 15 L15 3" stroke="#e23b2e" stroke-width="1.5"/></svg>
<span class="t" style="left:864px;top:538px;font-size:11.3px;color:#f2f2f2">党庆庆</span>

<!-- tile 6 -->
<div style="left:837px;top:566.5px;width:168px;height:95px;border:1.2px solid #55575b;border-radius:3px;background:#232427"></div>
<svg style="left:894px;top:579.5px" width="53" height="53" viewBox="0 0 53 53"><defs><clipPath id="c6"><circle cx="26.5" cy="26.5" r="26.5"/></clipPath></defs><g clip-path="url(#c6)"><rect width="53" height="53" fill="#1b1517"/><path d="M7 8 C12 0 30 -2 36 6 C40 14 38 24 36 28 L14 27 C10 22 6 16 7 8z" fill="#c8302e"/><path d="M30 4 C34 8 37 16 35 27" stroke="#a02424" stroke-width="2" fill="none"/><path d="M0 10 C8 8 16 14 18 24 L17 44 C10 46 2 42 0 38z" fill="#2f74c8"/><path d="M2 14 C9 14 14 20 15 28" stroke="#f4f4f4" stroke-width="2.2" fill="none"/><rect x="8" y="18" width="4" height="2" fill="#e23"/><path d="M0 22 C6 22 11 28 12 36 L9 42 L0 42z" fill="#ecd0b8"/><path d="M9 34 L18 30 L20 46 L11 48z" fill="#f2bcd4"/><path d="M16 30 C22 24 34 25 42 30 C48 34 50 40 48 46 L40 53 L20 53 L17 42z" fill="#aaa886"/><path d="M22 36 C28 34 34 36 38 40" stroke="#8b8a6a" stroke-width="1" fill="none"/><circle cx="39" cy="17" r=".8" fill="#ddd"/><circle cx="42" cy="33" r="1" fill="#ddd"/></g></svg>
<div style="left:839px;top:635px;width:61.5px;height:23.5px;background:#121314"></div>
<svg style="left:843px;top:638px" width="17" height="17" viewBox="0 0 17 17"><rect x="5" y="1" width="7" height="10" rx="3.5" fill="#e6e6e6"/><path d="M2.5 6.5 C2.5 10 5 12 8.5 12 C12 12 14.5 10 14.5 6.5M8.5 12v3.5" stroke="#e6e6e6" stroke-width="1.3" fill="none"/><path d="M1.5 15 L15 3" stroke="#e23b2e" stroke-width="1.5"/></svg>
<span class="t" style="left:864px;top:642px;font-size:11.3px;color:#f2f2f2">焦俊凯</span>

<!-- bottom-left share label -->
<div style="left:3px;top:650.5px;width:214px;height:24.5px;background:#0f1012"></div>
<div style="left:4.2px;top:655.7px;width:15px;height:10.5px;background:#fff;border-radius:2px"></div>
<svg style="left:6.5px;top:656.5px" width="10" height="9" viewBox="0 0 10 9"><path d="M2 7.5 C2.3 4.8 4.3 3.5 6.8 3.5" stroke="#111" stroke-width="1.5" fill="none"/><path d="M5.6 1.3 L8.9 3.5 L5.6 5.7z" fill="#111"/></svg>
<div style="left:7.7px;top:668.4px;width:8.3px;height:2.6px;background:#fff;border-radius:1.3px"></div>
<div style="left:25px;top:655.7px;width:7.3px;height:10.5px;border-radius:3.6px;background:#41e84a"></div>
<svg style="left:21.5px;top:660.5px" width="15" height="11.5" viewBox="0 0 15 11.5"><path d="M1.3 1 C1.3 5 3.8 7.3 7.2 7.3 C10.6 7.3 13.4 5 13.4 1M7.2 7.3v3.5" stroke="#fff" stroke-width="1.4" fill="none"/></svg>
<span class="t" style="left:38px;top:655.7px;font-size:17px;color:#f2f2f2">鹰扑入雾的屏幕共享</span>
<div style="left:197.8px;top:663px;width:3.6px;height:6.6px;background:#ee3a2e;border-radius:1.2px"></div>
<div style="left:203.3px;top:660.6px;width:3.7px;height:9px;background:#d4d4d6;border-radius:1.2px"></div>
<div style="left:208.9px;top:657.8px;width:3.5px;height:11.8px;background:#d4d4d6;border-radius:1.2px"></div>

</body></html>
